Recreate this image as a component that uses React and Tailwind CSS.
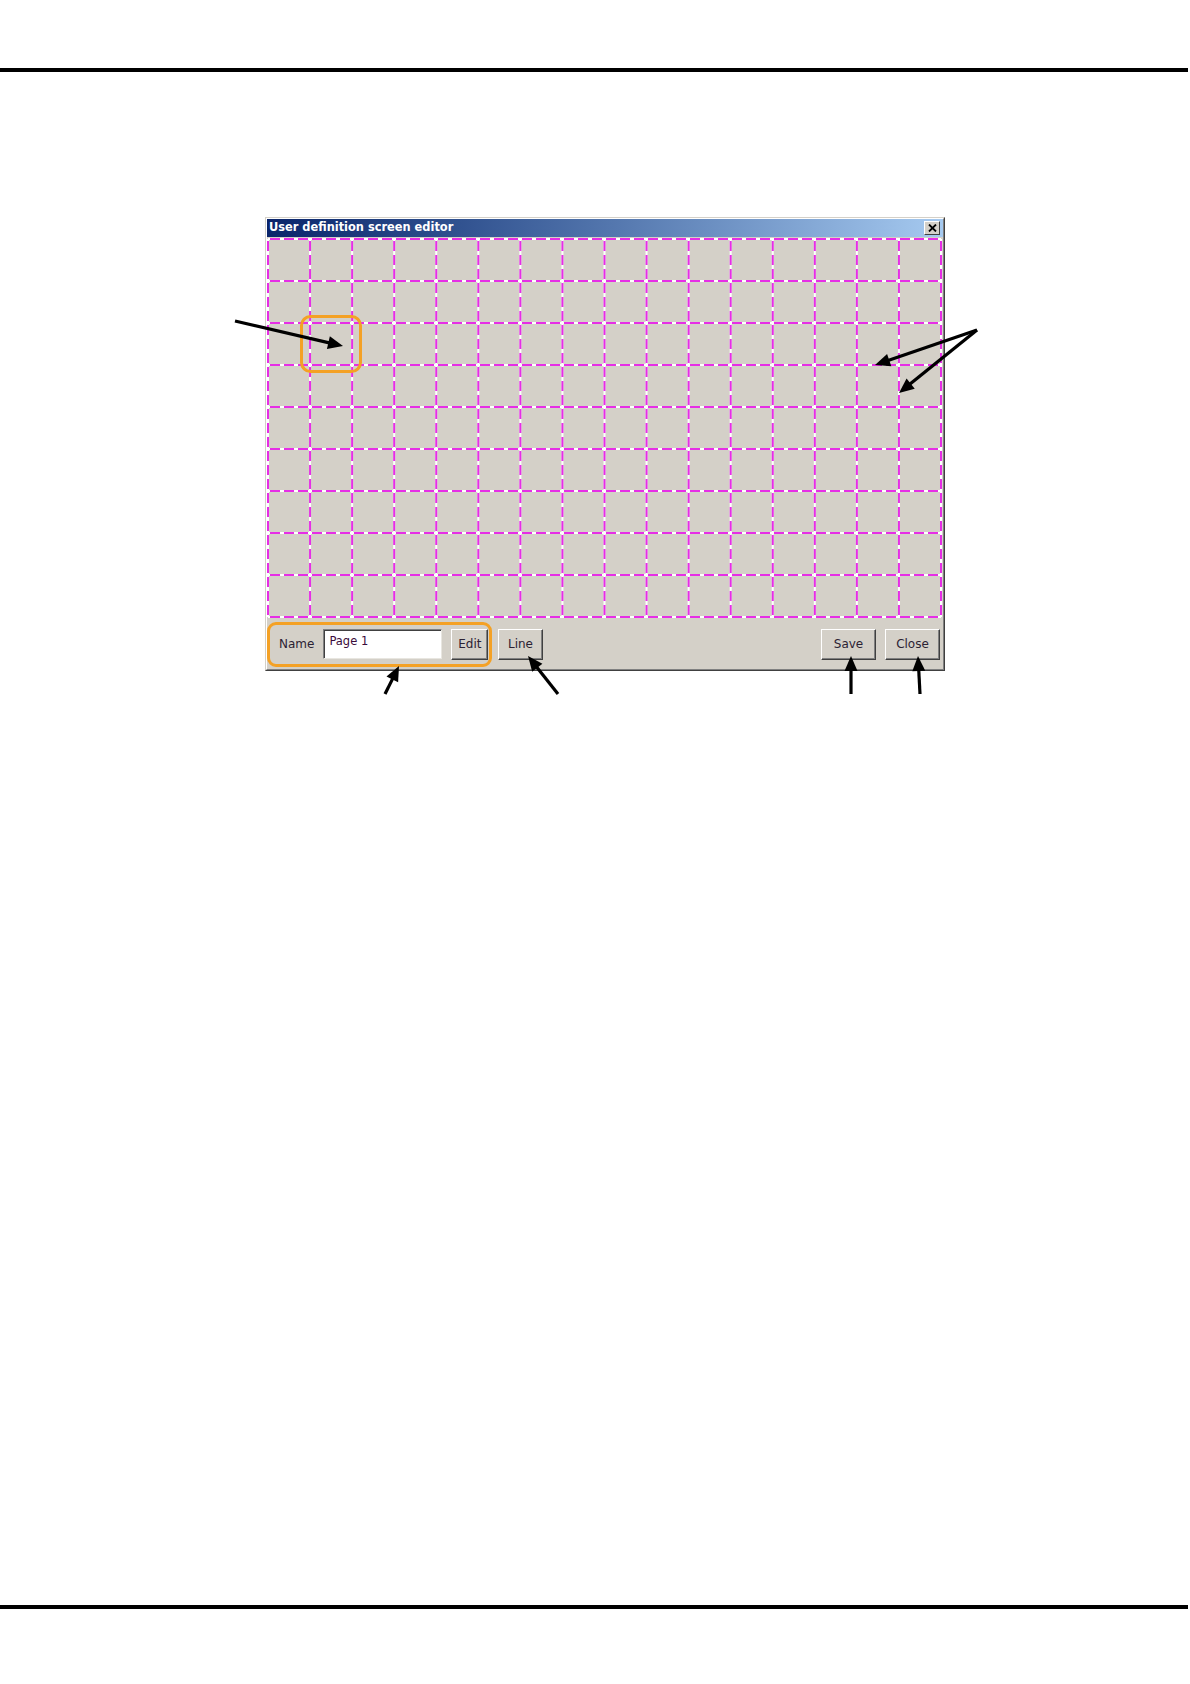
import React from "react";

const font = { fontFamily: '"DejaVu Sans", Verdana, sans-serif' };

// grid geometry inside the editor canvas (svg local coords)
const COLS = Array.from({ length: 17 }, (_, i) => 1 + (i * 673) / 16);
const ROWS = Array.from({ length: 10 }, (_, j) => 2 + j * 42);

const GridCanvas = () => (
  <svg width="676" height="382" className="block">
    <rect x="0" y="0" width="676" height="382" fill="#d4d0c8" />
    {ROWS.map((y) => (
      <g key={"h" + y}>
        <line x1={1} y1={y} x2={674} y2={y} stroke="#ffffff" strokeWidth="2" />
        <line x1={1} y1={y} x2={674} y2={y} stroke="#e62ee6" strokeWidth="2" strokeDasharray="10 4" strokeDashoffset="-2" />
      </g>
    ))}
    {COLS.map((x) => (
      <g key={"v" + x}>
        <line x1={x} y1={2} x2={x} y2={380} stroke="#ffffff" strokeWidth="2" />
        <line x1={x} y1={2} x2={x} y2={380} stroke="#e62ee6" strokeWidth="2" strokeDasharray="10 4" strokeDashoffset="-2" />
      </g>
    ))}
  </svg>
);

const Btn = ({ children, w }) => (
  <div
    className={`h-[31px] ${w} flex items-center justify-center bg-[#d4d0c8] border border-t-white border-l-white border-r-[#404040] border-b-[#404040] shadow-[inset_-1px_-1px_#808080] text-[12px] text-[#2b2233]`}
  >
    {children}
  </div>
);

const Arrow = ({ x1, y1, x2, y2 }) => {
  const dx = x2 - x1;
  const dy = y2 - y1;
  const len = Math.hypot(dx, dy);
  const ux = dx / len;
  const uy = dy / len;
  const hl = 15;
  const hw = 6.5;
  const bx = x2 - ux * hl;
  const by = y2 - uy * hl;
  const pts = `${x2},${y2} ${bx - uy * hw},${by + ux * hw} ${bx + uy * hw},${by - ux * hw}`;
  return (
    <g>
      <line x1={x1} y1={y1} x2={bx + ux * 2} y2={by + uy * 2} stroke="#000" strokeWidth="3.2" />
      <polygon points={pts} fill="#000" />
    </g>
  );
};

export default function App() {
  return (
    <div className="relative w-[1190px] h-[1684px] bg-white overflow-hidden" style={font}>
      <div className="pt-[68px]">
        <div className="h-[4px] w-[1188px] bg-black" />
      </div>

      {/* editor window */}
      <div className="ml-[265px] mt-[145px] w-[680px] h-[454px] border border-t-[#d4d0c8] border-l-[#d4d0c8] border-r-[#404040] border-b-[#404040]">
        <div className="h-full flex flex-col bg-[#d4d0c8] border border-t-white border-l-white border-r-[#808080] border-b-[#808080]">
          <div className="h-[18px] flex items-center justify-between bg-linear-to-r from-[#0a246a] to-[#a6caf0] pl-[2px] pr-[3px]">
            <span className="text-[11.4px] font-bold text-white leading-none">User definition screen editor</span>
            <div className="w-[16px] h-[14px] flex items-center justify-center bg-[#d4d0c8] border border-t-white border-l-white border-r-[#404040] border-b-[#404040]">
              <svg width="9" height="8" viewBox="0 0 9 8">
                <path d="M1 0.5 L8 7.5 M8 0.5 L1 7.5" stroke="#000" strokeWidth="1.8" />
              </svg>
            </div>
          </div>

          <GridCanvas />

          <div className="flex-1 flex items-center pr-[3px]">
            <div className="h-[45px] w-[225px] flex items-center gap-[9px] pl-[9px] border-[3px] border-[#f4a125] rounded-[9px]">
              <span className="text-[12px] text-[#2b2233]">Name</span>
              <div className="h-[30px] w-[119px] bg-white border border-t-[#808080] border-l-[#808080] border-r-[#e8e6e0] border-b-[#e8e6e0] shadow-[inset_1px_1px_#404040] pl-[5px] pt-[3px] text-[11.5px] text-[#3a0a3a] leading-[16px]">
                Page 1
              </div>
              <Btn w="w-[37px]">Edit</Btn>
            </div>
            <div className="ml-[6px]">
              <Btn w="w-[45px]">Line</Btn>
            </div>
            <div className="ml-auto flex gap-[9px]">
              <Btn w="w-[55px]">Save</Btn>
              <Btn w="w-[55px]">Close</Btn>
            </div>
          </div>
        </div>
      </div>

      <div className="mt-[934px] h-[4px] w-[1188px] bg-black" />

      {/* annotation overlay */}
      <svg className="absolute left-0 top-0 pointer-events-none" width="1190" height="1684">
        <rect x="301.5" y="316.5" width="59" height="55" rx="9" fill="none" stroke="#f4a125" strokeWidth="3" />
        <Arrow x1={235} y1={321} x2={343} y2={346} />
        <Arrow x1={977} y1={330} x2={875} y2={365} />
        <Arrow x1={977} y1={330} x2={899} y2={393} />
        <Arrow x1={385} y1={694} x2={399} y2={666} />
        <Arrow x1={558} y1={694} x2={528} y2={656} />
        <Arrow x1={851} y1={694} x2={851} y2={656} />
        <Arrow x1={920} y1={694} x2={918} y2={656} />
      </svg>
    </div>
  );
}
